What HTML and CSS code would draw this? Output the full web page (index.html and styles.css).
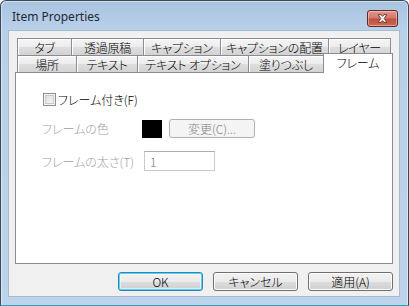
FILE: index.html
```html
<!DOCTYPE html>
<html lang="ja">
<head>
<meta charset="utf-8">
<title>Item Properties</title>
<link rel="stylesheet" href="styles.css">
</head>
<body>
<div class="window">
  <div class="titlebar">
    <span class="title">Item Properties</span>
    <span class="close">
      <svg width="30" height="17" viewBox="0 0 30 17">
        <path d="M10.5 4.5 L13.5 4.5 L15 6.3 L16.5 4.5 L19.5 4.5 L16.8 8.5 L19.5 12.5 L16.5 12.5 L15 10.7 L13.5 12.5 L10.5 12.5 L13.2 8.5 Z" fill="#f4f4f4" stroke="#6a3a35" stroke-width="1" stroke-linejoin="round"/>
      </svg>
    </span>
  </div>
  <div class="client">
    <div class="tabs">
      <div class="tabrow">
        <div class="tab first w-tab">タブ</div>
        <div class="tab w-trans">透過原稿</div>
        <div class="tab w-cap">キャプション</div>
        <div class="tab w-cappos">キャプションの配置</div>
        <div class="tab w-layer">レイヤー</div>
      </div>
      <div class="tabrow">
        <div class="tab first w-place">場所</div>
        <div class="tab w-text">テキスト</div>
        <div class="tab w-textopt">テキスト オプション</div>
        <div class="tab w-fill">塗りつぶし</div>
        <div class="tab selected w-frame">フレーム</div>
      </div>
    </div>
    <div class="panel">
      <div class="row row-check">
        <span class="checkbox"></span>
        <span class="check-label">フレーム付き(F)</span>
      </div>
      <div class="row row-color">
        <span class="label">フレームの色</span>
        <span class="swatch"></span>
        <span class="btn-disabled">変更(C)...</span>
      </div>
      <div class="row row-width">
        <span class="label">フレームの太さ(T)</span>
        <span class="input">1</span>
      </div>
    </div>
    <div class="buttons">
      <span class="btn default">OK</span>
      <span class="btn">キャンセル</span>
      <span class="btn">適用(A)</span>
    </div>
  </div>
</div>
</body>
</html>
```
FILE: styles.css
```css
* { box-sizing: border-box; }
html, body { margin: 0; padding: 0; background: #ffffff; }
body {
  width: 409px;
  height: 306px;
  overflow: hidden;
  font-family: "Noto Sans CJK JP", "Noto Sans", sans-serif;
  font-size: 12px;
  font-weight: 300;
  font-feature-settings: "palt";
}
.window {
  width: 409px;
  height: 306px;
  border: 1px solid #3b4856;
  border-bottom-color: #1fa6c8;
  border-radius: 6px 6px 0 0;
  background: linear-gradient(to bottom, #a9c4e1 0px, #b9d0e9 30px, #bdd3eb 100%);
  display: flex;
  flex-direction: column;
  padding: 0 8px 8px 7px;
  box-shadow: inset 1px 1px 0 rgba(255,255,255,0.45), inset -1px 0 0 rgba(255,255,255,0.45);
}
.titlebar {
  height: 29px;
  display: flex;
  align-items: flex-start;
  justify-content: space-between;
  flex: none;
}
.title {
  font-family: "Noto Sans", "Open Sans", sans-serif;
  font-size: 12px;
  font-weight: 400;
  color: #1e2a36;
  margin-left: 4px;
  margin-top: 8px;
  line-height: 16px;
  font-feature-settings: normal;
}
.close {
  width: 31px;
  height: 17px;
  margin-top: 9px;
  margin-right: 2px;
  border: 1px solid #5e2a24;
  border-radius: 3px;
  background: linear-gradient(to bottom, #e0958a 0%, #d27a6c 45%, #c0503f 55%, #cc6a55 100%);
  box-shadow: inset 0 0 0 1px rgba(255,220,210,0.5);
  display: flex;
  align-items: center;
  justify-content: center;
}
.close svg { display: block; }
.client {
  flex: 1;
  background: #f0f0f0;
  border: 1px solid #a6bad0;
  display: flex;
  flex-direction: column;
  padding: 7px 0 0 6px;
}
.tabs { display: flex; flex-direction: column; margin-left: 2px; }
.tabrow { display: flex; align-items: flex-end; height: 17px; }
.tab {
  height: 17px;
  border: 1px solid #898c95;
  border-bottom: none;
  margin-left: -1px;
  background: linear-gradient(to bottom, #f5f5f5 0%, #ececec 50%, #dedede 51%, #d3d3d3 100%);
  box-shadow: inset 1px 1px 0 #ffffff;
  display: flex;
  align-items: center;
  justify-content: center;
  line-height: 12px;
  color: #000;
  padding-top: 1px;
  white-space: nowrap;
  letter-spacing: -0.2px;
}
.tab.first { margin-left: 0; }
.tab.selected {
  height: 20px;
  margin-bottom: -1px;
  background: #ffffff;
  box-shadow: none;
  position: relative;
  z-index: 2;
  padding-top: 1px;
  padding-bottom: 2px;
}
.w-tab { width: 55px; }
.w-trans { width: 73px; }
.w-cap { width: 78px; }
.w-cappos { width: 109px; }
.w-layer { width: 63px; }
.w-place { width: 60px; }
.w-text { width: 62px; }
.w-textopt { width: 112px; }
.w-fill { width: 76px; }
.w-frame { width: 70px; }
.panel {
  width: 378px;
  height: 192px;
  border: 1px solid #898c95;
  background: #ffffff;
  padding: 20px 0 0 26px;
  display: flex;
  flex-direction: column;
  position: relative;
  z-index: 1;
}
.row { display: flex; align-items: center; }
.row-check { height: 13px; margin-left: 1px; }
.checkbox {
  width: 13px;
  height: 13px;
  border: 1px solid #8f8f8f;
  background: linear-gradient(135deg, #d9d9d9 0%, #ededed 60%, #f7f7f7 100%);
  box-shadow: inset 0 0 0 1px #f4f4f4, inset 0 0 0 2px #c9c9c9;
  flex: none;
}
.check-label { margin-left: 2px; color: #000; line-height: 13px; }
.row-color { margin-top: 13px; height: 19px; }
.row-width { margin-top: 13px; height: 20px; }
.label { width: 100px; color: #a0a0a0; flex: none; }
.swatch { width: 20px; height: 18px; background: #000000; flex: none; }
.btn-disabled {
  margin-left: 7px;
  width: 86px;
  height: 19px;
  border: 1px solid #adb2b5;
  border-radius: 3px;
  background: #f4f4f4;
  color: #838383;
  display: flex;
  align-items: center;
  justify-content: center;
}
.row-width .input { margin-left: 2px; }
.input {
  width: 71px;
  height: 20px;
  border: 1px solid #c7cacf;
  border-top-color: #abadb3;
  background: #ffffff;
  color: #6d6d6d;
  padding-left: 5px;
  display: flex;
  align-items: center;
}
.buttons {
  display: flex;
  justify-content: flex-end;
  gap: 10px;
  margin-top: 8px;
  padding-right: 6px;
}
.btn {
  width: 85px;
  height: 19px;
  border: 1px solid #707070;
  border-radius: 3px;
  background: linear-gradient(to bottom, #f2f2f2 0%, #ebebeb 50%, #dddddd 51%, #cfcfcf 100%);
  box-shadow: inset 0 0 0 1px #fcfcfc;
  display: flex;
  align-items: center;
  justify-content: center;
  color: #000;
  line-height: 14px;
}
.btn.default {
  border-color: #3c7fb1;
  box-shadow: inset 0 0 0 1px #48d8fb, inset 0 0 0 2px rgba(255,255,255,0.5);
}
```
